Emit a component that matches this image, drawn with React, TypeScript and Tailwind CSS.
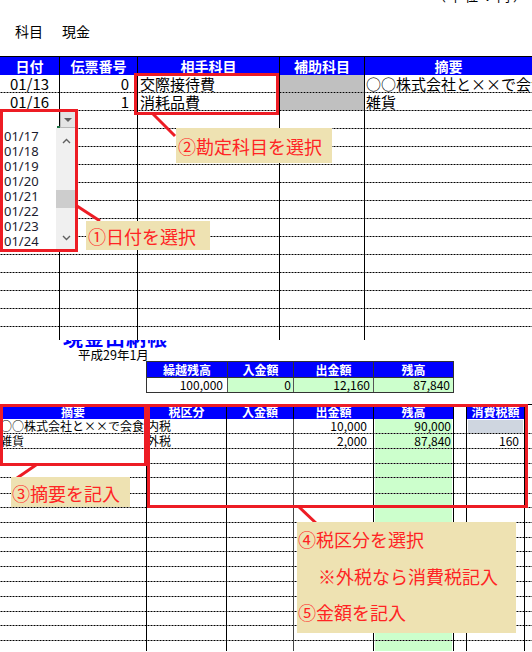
import React from 'react';

const FONT = "font-['Noto_Sans_CJK_JP','Noto_Sans',sans-serif]";
// Excel style dotted row line drawn at the bottom pixel of a row
const DASH =
  'bg-[linear-gradient(90deg,#000_2px,transparent_2px)] bg-[length:3px_1px] bg-bottom bg-repeat-x';

type TopRow = { date?: string; no?: string; account?: string; sub?: boolean; memo?: string };

const topRows: TopRow[] = [
  { date: '01/13', no: '0', account: '交際接待費', sub: true, memo: '○○株式会社と××で会食' },
  { date: '01/16', no: '1', account: '消耗品費', sub: true, memo: '雑貨' },
  ...Array.from({ length: 12 }, () => ({})),
];

type LowRow = { memo?: string; tax?: string; out?: string; bal?: string; cons?: string; consGray?: boolean };

const lowRows: LowRow[] = [
  { memo: '○○株式会社と××で会食', tax: '内税', out: '10,000', bal: '90,000', consGray: true },
  { memo: '雑貨', tax: '外税', out: '2,000', bal: '87,840', cons: '160' },
];

const lowHeights = [
  'h-[15px]', 'h-[15px]', 'h-[15px]', 'h-[14px]', 'h-[16px]', 'h-[14px]', 'h-[15px]', 'h-[15px]',
  'h-[14px]', 'h-[15px]', 'h-[15px]', 'h-[15px]', 'h-[15px]', 'h-[14px]', 'h-[15px]',
];

const dates = ['01/17', '01/18', '01/19', '01/20', '01/21', '01/22', '01/23', '01/24'];

function Label({ className, children }: { className: string; children: React.ReactNode }) {
  return (
    <div className={`absolute bg-[#eee2b2] text-[18px] leading-[22px] text-[#ff2424] ${className}`}>
      {children}
    </div>
  );
}

function RedBox({ className }: { className: string }) {
  return <div className={`absolute border-[3px] border-[#ed1c24] ${className}`} />;
}

export default function App() {
  return (
    <div className={`relative w-[532px] h-[652px] overflow-hidden bg-white text-black ${FONT}`}>
      {/* ---------- upper sheet: 仕訳入力 ---------- */}
      <div className="h-[340px]">
        <div className="h-[56px]">
          <div className="relative h-[4px] overflow-hidden">
            <span className="absolute right-[3px] top-[-11px] text-[13px] leading-[14px] tracking-[3px]">（単位：円）</span>
          </div>
          <div className="flex gap-[19px] pl-[15px] pt-[19px] text-[14px] leading-[16px]">
            <span>科目</span>
            <span>現金</span>
          </div>
        </div>

        {/* header */}
        <div className="flex h-[19px] border-t border-black text-[14px] font-bold leading-[18px] text-white">
          <div className="w-[60px] shrink-0 border-r border-black bg-[#0000ff] text-center">日付</div>
          <div className="w-[78px] shrink-0 border-r border-black bg-[#0000ff] text-center">伝票番号</div>
          <div className="w-[142px] shrink-0 border-r border-black bg-[#0000ff] text-center">相手科目</div>
          <div className="w-[85px] shrink-0 border-r border-black bg-[#0000ff] text-center">補助科目</div>
          <div className="flex-1 bg-[#0000ff] text-center">摘要</div>
        </div>

        {topRows.map((r, i) => (
          <div key={i} className={`flex h-[18px] text-[15px] leading-[17px] ${DASH}`}>
            <div className="w-[60px] shrink-0 border-r border-black">
              <div className="h-[17px] text-center">{r.date}</div>
            </div>
            <div className="w-[78px] shrink-0 border-r border-black">
              <div className="h-[17px] pr-[8px] text-right">{r.no}</div>
            </div>
            <div className="w-[142px] shrink-0 border-r border-black">
              <div className="h-[17px] pl-[2px]">{r.account}</div>
            </div>
            <div className="w-[85px] shrink-0 border-r border-black">
              <div className={`h-[17px] ${r.sub ? 'bg-[#c0c0c0]' : ''}`} />
            </div>
            <div className="min-w-0 flex-1">
              <div className="h-[17px] overflow-hidden whitespace-nowrap pl-[1px]">{r.memo}</div>
            </div>
          </div>
        ))}
        <div className="flex h-[13px]">
          <div className="w-[60px] shrink-0 border-r border-black" />
          <div className="w-[78px] shrink-0 border-r border-black" />
          <div className="w-[142px] shrink-0 border-r border-black" />
          <div className="w-[85px] shrink-0 border-r border-black" />
          <div className="flex-1" />
        </div>
      </div>

      {/* ---------- lower sheet: 現金出納帳 ---------- */}
      <div>
        <div className="relative h-[8px] overflow-hidden">
          <span className="absolute left-[63px] top-[-12px] text-[20px] font-bold leading-[20px] tracking-[1px] text-[#0000ff]">
            現金出納帳
          </span>
        </div>
        <div className="h-[13px] pl-[78px] text-[12.5px] leading-[13px]">平成29年1月</div>

        {/* summary */}
        <div className="ml-[146px] w-[308px] border border-[#333]">
          <div className="flex h-[15px] text-[12px] font-bold leading-[15px] text-white">
            <div className="w-[81px] border-r border-[#333] bg-[#0000ff] text-center">繰越残高</div>
            <div className="w-[66px] border-r border-[#333] bg-[#0000ff] text-center">入金額</div>
            <div className="w-[80px] border-r border-[#333] bg-[#0000ff] text-center">出金額</div>
            <div className="flex-1 bg-[#0000ff] text-center">残高</div>
          </div>
          <div className="flex h-[15px] border-t border-[#333] text-[12px] leading-[14px]">
            <div className="w-[81px] border-r border-[#555] pr-[4px] text-right">100,000</div>
            <div className="w-[66px] border-r border-[#555] bg-[#ccffcc] pr-[2px] text-right">0</div>
            <div className="w-[80px] border-r border-[#555] bg-[#ccffcc] pr-[3px] text-right">12,160</div>
            <div className="flex-1 bg-[#ccffcc] pr-[3px] text-right">87,840</div>
          </div>
        </div>

        {/* ledger */}
        <div className="mt-[11px] flex h-[15px] border-t border-black text-[12px] font-bold leading-[14px] text-white">
          <div className="w-[147px] shrink-0 border-r border-black bg-[#0000ff] text-center">摘要</div>
          <div className="w-[80px] shrink-0 border-r border-black bg-[#0000ff] text-center">税区分</div>
          <div className="w-[67px] shrink-0 border-r border-black bg-[#0000ff] text-center">入金額</div>
          <div className="w-[80px] shrink-0 border-r border-black bg-[#0000ff] text-center">出金額</div>
          <div className="w-[80px] shrink-0 border-r border-black bg-[#0000ff] text-center">残高</div>
          <div className="w-[13px] shrink-0 border-r border-black bg-white" />
          <div className="w-[58px] shrink-0 border-r border-black bg-[#0000ff] text-center">消費税額</div>
          <div className="flex-1 bg-white" />
        </div>

        {lowHeights.map((h, i) => {
          const r = lowRows[i] ?? {};
          return (
            <div key={i} className={`flex ${h} text-[12px] leading-[14px] ${DASH}`}>
              <div className="w-[147px] shrink-0 border-r border-black">
                <div className="h-[calc(100%-1px)] overflow-hidden whitespace-nowrap">{r.memo}</div>
              </div>
              <div className="w-[80px] shrink-0 border-r border-black">
                <div className="h-[calc(100%-1px)]">{r.tax}</div>
              </div>
              <div className="w-[67px] shrink-0 border-r border-[#444]" />
              <div className="w-[80px] shrink-0 border-r border-black">
                <div className="h-[calc(100%-1px)] pr-[6px] text-right">{r.out}</div>
              </div>
              <div className="w-[80px] shrink-0 border-r border-black">
                <div className="mx-[1px] h-[calc(100%-1px)] bg-[#ccffcc] pr-[1px] text-right">{r.bal}</div>
              </div>
              <div className="w-[13px] shrink-0 border-r border-black" />
              <div className="w-[58px] shrink-0 border-r border-black">
                <div
                  className={`mx-[1px] h-[calc(100%-2px)] pr-[4px] text-right ${r.consGray ? 'mt-[1px] bg-[#cfd6e0]' : ''}`}
                >
                  {r.cons}
                </div>
              </div>
              <div className="flex-1" />
            </div>
          );
        })}
        <div className="flex h-[10px]">
          <div className="w-[147px] shrink-0 border-r border-black" />
          <div className="w-[80px] shrink-0 border-r border-black" />
          <div className="w-[67px] shrink-0 border-r border-[#444]" />
          <div className="w-[80px] shrink-0 border-r border-black" />
          <div className="w-[80px] shrink-0 border-r border-black">
            <div className="mx-[1px] h-full bg-[#ccffcc]" />
          </div>
          <div className="w-[13px] shrink-0 border-r border-black" />
          <div className="w-[58px] shrink-0 border-r border-black" />
          <div className="flex-1" />
        </div>
      </div>

      {/* ---------- date dropdown (open) ---------- */}
      <div className="absolute left-[60px] top-[111px] flex h-[17px] w-[16px] items-center justify-center border border-[#b8b8b8] bg-[#e4e4e4]">
        <div className="h-0 w-0 border-x-[4px] border-t-[4px] border-x-transparent border-t-[#606060]" />
      </div>
      <div className="absolute left-[57px] top-[126px] h-[3px] w-[3px] bg-[#217346]" />
      <div className="absolute left-0 top-[128px] flex h-[122px] w-[76px] bg-white">
        <div className="flex-1 pl-[4px] pt-[1px] font-['Noto_Sans',sans-serif] text-[13px] leading-[15px] text-[#1b1b2e]">
          {dates.map((d) => (
            <div key={d} className="h-[15px]">
              {d}
            </div>
          ))}
        </div>
        <div className="relative w-[20px] bg-[#f0f0f0]">
          <svg className="absolute left-[6px] top-[10px]" width="9" height="6" viewBox="0 0 9 6">
            <path d="M1 5 L4.5 1.5 L8 5" fill="none" stroke="#606060" strokeWidth="1.4" />
          </svg>
          <div className="absolute left-0 top-[62px] h-[18px] w-[20px] bg-[#cdcdcd]" />
          <svg className="absolute left-[6px] top-[107px]" width="9" height="6" viewBox="0 0 9 6">
            <path d="M1 1 L4.5 4.5 L8 1" fill="none" stroke="#606060" strokeWidth="1.4" />
          </svg>
        </div>
      </div>

      {/* ---------- annotations ---------- */}
      <RedBox className="left-0 top-[109px] h-[143px] w-[78px]" />
      <RedBox className="left-[134px] top-[73px] h-[42px] w-[145px]" />
      <RedBox className="left-0 top-[404px] h-[62px] w-[147px]" />
      <RedBox className="left-[147px] top-[404px] h-[104px] w-[381px]" />

      <svg className="pointer-events-none absolute inset-0" width="532" height="652">
        <g stroke="#ed1c24" strokeWidth="3" fill="none">
          <line x1="77" y1="206" x2="100" y2="221" />
          <line x1="153" y1="114" x2="175" y2="136" />
          <line x1="36" y1="465" x2="17" y2="478" />
          <line x1="298" y1="506" x2="318" y2="525" />
        </g>
      </svg>

      <Label className="left-[86px] top-[221px] h-[29px] w-[124px] pl-[2px] pt-[4px]">①日付を選択</Label>
      <Label className="left-[176px] top-[128px] h-[35px] w-[156px] pl-[2px] pt-[7px]">②勘定科目を選択</Label>
      <Label className="left-[11px] top-[477px] h-[30px] w-[119px] pl-[1px] pt-[5px]">③摘要を記入</Label>
      <Label className="left-[297px] top-[522px] h-[111px] w-[219px] pl-[1px] pt-[6px]">
        <div>④税区分を選択</div>
        <div className="mt-[15px] pl-[20px]">※外税なら消費税記入</div>
        <div className="mt-[14px]">⑤金額を記入</div>
      </Label>
    </div>
  );
}
